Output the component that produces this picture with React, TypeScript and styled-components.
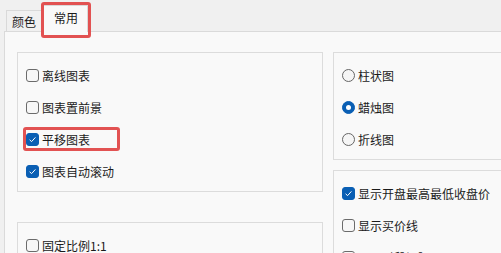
import React from 'react';
import styled, { createGlobalStyle, css } from 'styled-components';

const GlobalStyle = createGlobalStyle`
  html, body {
    margin: 0;
    padding: 0;
    width: 501px;
    height: 253px;
    overflow: hidden;
    background: #f0f0f0;
  }
  body {
    font-family: "Noto Sans CJK SC", "Noto Sans", sans-serif;
    font-size: 12px;
    color: #1b1b1b;
  }
`;

const Window = styled.div`
  display: flex;
  flex-direction: column;
  height: 253px;
`;

const TabBar = styled.div`
  display: flex;
  flex-shrink: 0;
  align-items: flex-end;
  height: 31px;
  padding-left: 6px;
`;

const marked = css`
  &::after {
    content: '';
    position: absolute;
    border: 3px solid #e25252;
    border-radius: 3px;
    pointer-events: none;
  }
`;

const Tab = styled.div<{ $active?: boolean }>`
  position: relative;
  display: flex;
  align-items: center;
  box-sizing: border-box;
  border: 1px solid #d9d9d9;
  border-bottom: none;
  ${({ $active }) =>
    $active
      ? css`
          height: 27px;
          margin-bottom: -1px;
          padding: 0 9px 4px 10px;
          background: #f9f9f9;
          border-left: none;
          z-index: 1;
          ${marked}
          &::after {
            left: -3px;
            right: -4px;
            top: -4px;
            bottom: -6px;
          }
        `
      : css`
          height: 21px;
          padding: 1px 8px 0 5px;
          background: #f0f0f0;
          border-right: none;
        `}
`;

const Panel = styled.div`
  flex: 1;
  min-height: 0;
  margin-left: 4px;
  border-top: 1px solid #dadada;
  border-left: 1px solid #dadada;
  background: #f9f9f9;
  padding: 20px 0 0 12px;
  display: grid;
  grid-template-columns: 306px 260px;
  column-gap: 10px;
  align-items: start;
`;

const Column = styled.div<{ $gap: number }>`
  display: flex;
  flex-direction: column;
  gap: ${({ $gap }) => $gap}px;
`;

const Group = styled.div`
  box-sizing: border-box;
  border: 1px solid #dcdcdc;
  background: #f9f9f9;
  padding: 6px 8px 4px;
`;

const Item = styled.label<{ $marked?: boolean }>`
  position: relative;
  display: flex;
  align-items: center;
  gap: 3px;
  height: 32px;
  white-space: nowrap;
  ${({ $marked }) =>
    $marked &&
    css`
      ${marked}
      &::after {
        left: -3px;
        width: 91px;
        top: 4px;
        bottom: 4px;
      }
    `}
`;

const Box = styled.span<{ $checked?: boolean }>`
  display: flex;
  align-items: center;
  justify-content: center;
  box-sizing: border-box;
  width: 13px;
  height: 13px;
  border-radius: 3px;
  border: 1px solid ${({ $checked }) => ($checked ? '#0a5fb4' : '#6b6b6b')};
  background: ${({ $checked }) => ($checked ? '#0a5fb4' : '#f7f7f7')};
`;

const Radio = styled.span<{ $checked?: boolean }>`
  display: flex;
  align-items: center;
  justify-content: center;
  box-sizing: border-box;
  width: 13px;
  height: 13px;
  border-radius: 50%;
  border: 1px solid ${({ $checked }) => ($checked ? '#0a5fb4' : '#666')};
  background: ${({ $checked }) => ($checked ? '#0a5fb4' : '#f5f5f5')};
  &::after {
    content: '';
    display: ${({ $checked }) => ($checked ? 'block' : 'none')};
    width: 5px;
    height: 5px;
    border-radius: 50%;
    background: #fff;
  }
`;

const Check = ({ label, checked, mark }: { label: string; checked?: boolean; mark?: boolean }) => (
  <Item $marked={mark}>
    <Box $checked={checked}>
      {checked && (
        <svg width="9" height="9" viewBox="0 0 9 9">
          <path d="M1.6 4.8 L3.6 6.6 L7.4 2.4" fill="none" stroke="#fff" strokeWidth="1" />
        </svg>
      )}
    </Box>
    {label}
  </Item>
);

const Option = ({ label, checked }: { label: string; checked?: boolean }) => (
  <Item>
    <Radio $checked={checked} />
    {label}
  </Item>
);

export default function App() {
  return (
    <Window>
      <GlobalStyle />
      <TabBar>
        <Tab>颜色</Tab>
        <Tab $active>常用</Tab>
      </TabBar>
      <Panel>
        <Column $gap={30}>
          <Group>
            <Check label="离线图表" />
            <Check label="图表置前景" />
            <Check label="平移图表" checked mark />
            <Check label="图表自动滚动" checked />
          </Group>
          <Group>
            <Check label="固定比例1:1" />
            <Check label="显示网格" />
          </Group>
        </Column>
        <Column $gap={10}>
          <Group>
            <Option label="柱状图" />
            <Option label="蜡烛图" checked />
            <Option label="折线图" />
          </Group>
          <Group>
            <Check label="显示开盘最高最低收盘价" checked />
            <Check label="显示买价线" />
            <Check label="显示时段间隔" />
          </Group>
        </Column>
      </Panel>
    </Window>
  );
}
